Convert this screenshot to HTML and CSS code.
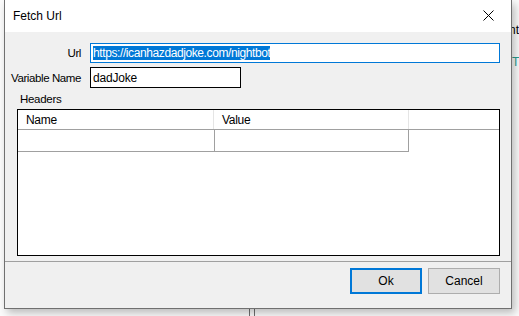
FILE: index.html
```html
<!DOCTYPE html>
<html lang="en">
<head>
  <meta charset="UTF-8" />
  <title>Fetch Url</title>
  <link rel="stylesheet" href="styles.css">
</head>
<body>
  <div class="desktop">
    <span class="bg-text bg-nt">nt</span>
    <span class="bg-text bg-t">T</span>
    <span class="bg-line bg-line-1"></span>
    <span class="bg-line bg-line-2"></span>

    <div class="dialog">
      <div class="titlebar">
        <span class="title">Fetch Url</span>
        <button class="close-btn" aria-label="Close">
          <svg width="11" height="11" viewBox="0 0 11 11">
            <path d="M0.5 0.5 L10.5 10.5 M10.5 0.5 L0.5 10.5" stroke="#000" stroke-width="1" fill="none" />
          </svg>
        </button>
      </div>

      <div class="dialog-body">
        <div class="form-grid">
          <label class="field-label">Url</label>
          <div class="input url-input"><span class="selected">https://icanhazdadjoke.com/nightbot</span></div>
          <label class="field-label">Variable Name</label>
          <div class="input var-input">dadJoke</div>
        </div>

        <div class="headers-label">Headers</div>
        <div class="grid-box">
          <div class="grid-row grid-head">
            <div class="cell">Name</div>
            <div class="cell">Value</div>
          </div>
          <div class="grid-row grid-data">
            <div class="cell"></div>
            <div class="cell"></div>
          </div>
        </div>
      </div>

      <div class="dialog-footer">
        <button class="btn btn-default">Ok</button>
        <button class="btn">Cancel</button>
      </div>
    </div>
  </div>
</body>
</html>
```

FILE: styles.css
```css
* {
  box-sizing: border-box;
  margin: 0;
  padding: 0;
}

html, body {
  width: 519px;
  height: 316px;
  overflow: hidden;
  font-family: 'Liberation Sans', Arial, sans-serif;
  font-size: 11px;
  color: #000;
}

.desktop {
  position: relative;
  width: 519px;
  height: 316px;
  background: #fbfbfb;
}

.bg-text {
  position: absolute;
  font-size: 12px;
}

.bg-nt {
  left: 509px;
  top: 23px;
}

.bg-t {
  left: 512px;
  top: 55px;
  color: #2a9d8f;
}

.bg-line {
  position: absolute;
  top: 300px;
  width: 1px;
  height: 16px;
  background: #707070;
}

.bg-line-1 { left: 249px; }
.bg-line-2 { left: 254px; }

.dialog {
  position: absolute;
  left: 4px;
  top: 0;
  width: 508px;
  height: 309px;
  border: 1px solid #707070;
  border-top: none;
  background: #f0f0f0;
  box-shadow: 3px 4px 8px rgba(0,0,0,0.25);
  display: flex;
  flex-direction: column;
}

.titlebar {
  height: 32px;
  background: #fff;
  display: flex;
  align-items: center;
  justify-content: space-between;
  padding-left: 8px;
}

.title {
  font-size: 12px;
  padding-bottom: 1px;
}

.close-btn {
  width: 46px;
  height: 32px;
  border: none;
  background: none;
  display: flex;
  align-items: center;
  justify-content: center;
  padding-left: 1px;
  padding-bottom: 1px;
}

.dialog-body {
  height: 230px;
  padding: 11px 0 0 12px;
  border-bottom: 1px solid #a0a0a0;
}

.form-grid {
  display: grid;
  grid-template-columns: 68px auto;
  column-gap: 9px;
  row-gap: 4px;
  align-items: center;
  justify-items: start;
  margin-left: -4px;
}

.field-label {
  justify-self: end;
  white-space: nowrap;
  font-size: 11.5px;
  letter-spacing: -0.4px;
}

.input {
  height: 20px;
  border: 1px solid #000;
  background: #fff;
  padding: 2px 2px;
  line-height: 14px;
  white-space: nowrap;
  overflow: hidden;
}

.url-input {
  width: 410px;
  border-color: #0078d7;
}

.var-input {
  width: 151px;
  height: 21px;
  padding-top: 3px;
  font-size: 12px;
  letter-spacing: -0.2px;
}

.selected {
  background: #0078d7;
  color: #fff;
  font-size: 12px;
  letter-spacing: -0.4px;
}

.headers-label {
  margin: 4px 0 0 3px;
  height: 17px;
  line-height: 14px;
  font-size: 11.5px;
  letter-spacing: -0.3px;
}

.grid-box {
  width: 483px;
  height: 147px;
  border: 1px solid #000;
  background: #fff;
}

.grid-row {
  display: grid;
  grid-template-columns: 196px 195px;
}

.grid-head {
  height: 20px;
  border-bottom: 1px solid #a0a0a0;
}

.grid-head .cell {
  border-right: 1px solid #e5e5e5;
  padding: 3px 0 0 8px;
  font-size: 12px;
  letter-spacing: -0.3px;
}

.grid-data {
  height: 22px;
  width: 391px;
  border-bottom: 1px solid #a0a0a0;
  border-right: 1px solid #a0a0a0;
}

.grid-data .cell + .cell {
  border-left: 1px solid #a0a0a0;
}

.dialog-footer {
  flex: 1;
  display: flex;
  justify-content: flex-end;
  align-items: flex-start;
  gap: 6px;
  padding: 6px 11px 0 0;
}

.btn {
  width: 72px;
  height: 26px;
  background: #e1e1e1;
  border: 1px solid #adadad;
  font-family: inherit;
  font-size: 12px;
  color: #000;
}

.btn-default {
  border: 2px solid #0078d7;
}
```
